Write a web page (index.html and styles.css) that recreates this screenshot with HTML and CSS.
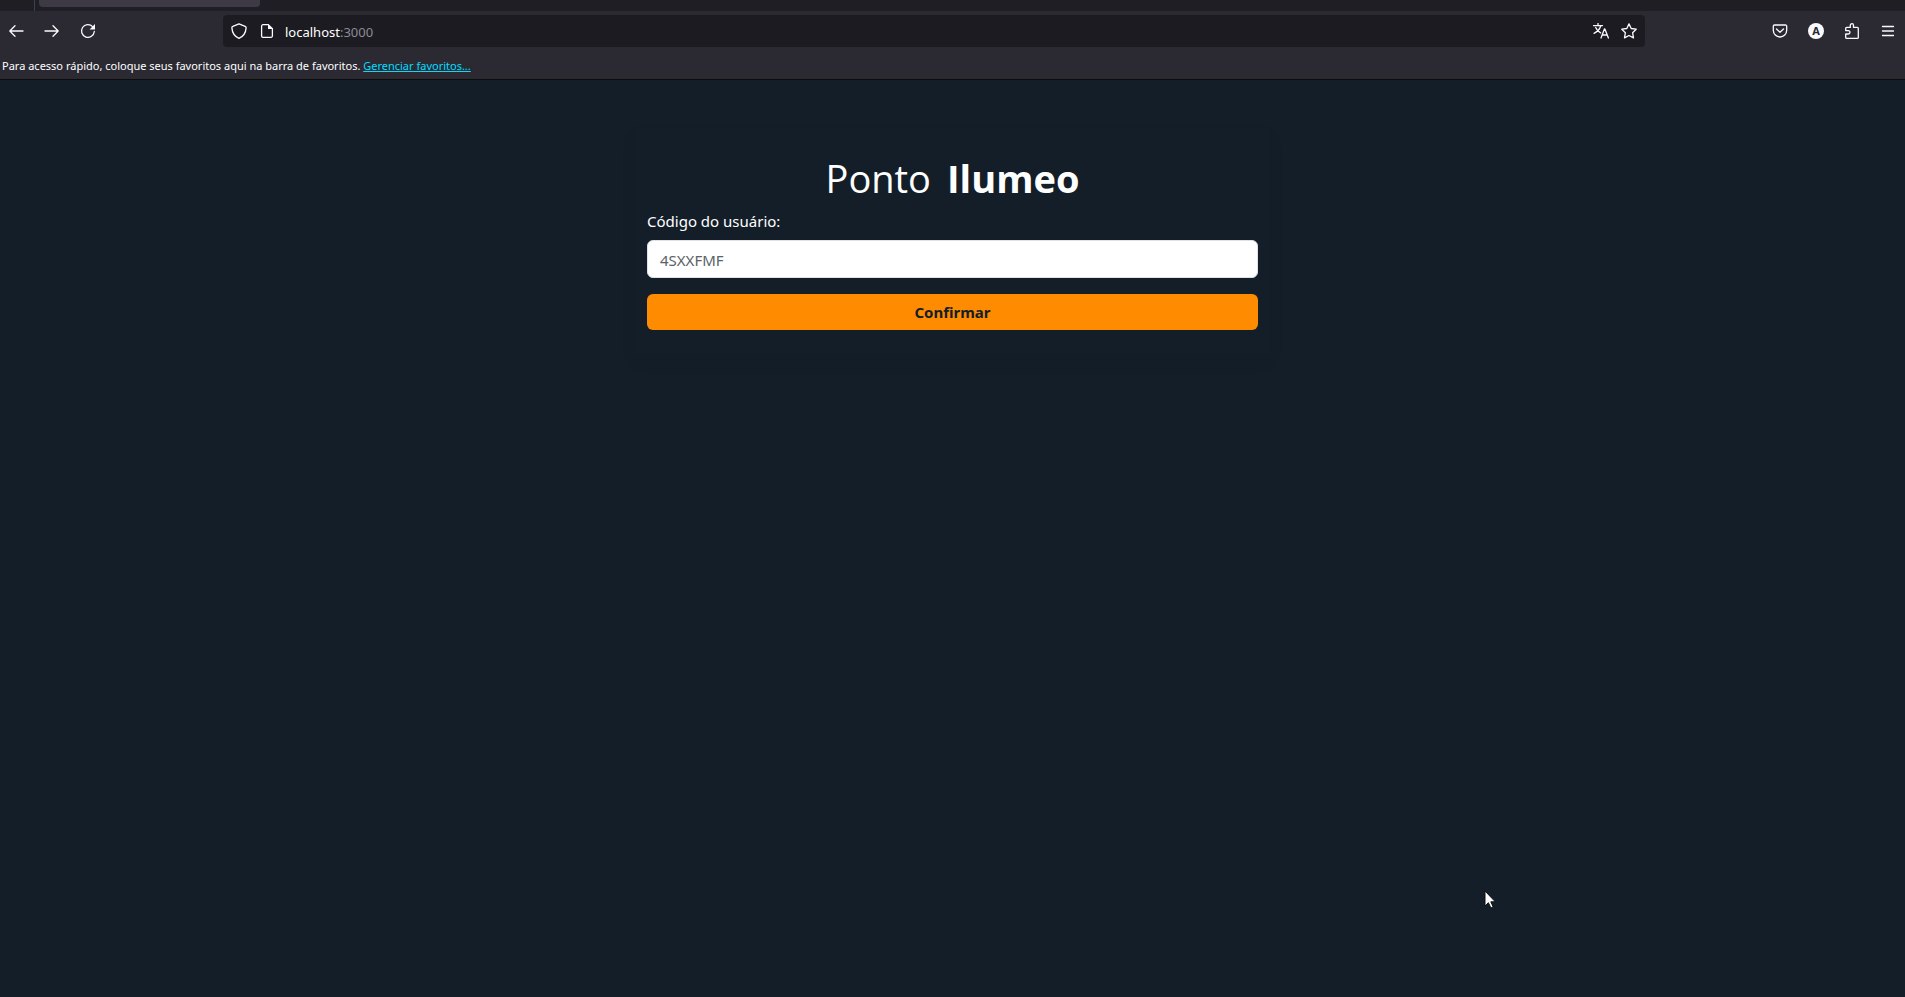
FILE: index.html
```html
<!DOCTYPE html>
<html lang="pt-BR">
<head>
<meta charset="utf-8">
<meta name="viewport" content="width=device-width, initial-scale=1">
<title>Ponto Ilumeo</title>
<link rel="stylesheet" href="styles.css">
</head>
<body>
<div class="browser">
  <div class="tab-strip">
    <span class="tab-divider"></span>
    <span class="tab"></span>
  </div>
  <nav class="toolbar" aria-label="Navegação">
    <div class="nav-buttons">
      <button class="tool" type="button" aria-label="Voltar"><svg class="icon" viewBox="0 0 16 16"><path d="M15 8H1.8M7 2.8 1.8 8 7 13.2"/></svg></button>
      <button class="tool" type="button" aria-label="Avançar"><svg class="icon" viewBox="0 0 16 16"><path d="M1 8h13.2M9 2.8 14.2 8 9 13.2"/></svg></button>
      <button class="tool" type="button" aria-label="Recarregar"><svg class="icon" viewBox="0 0 16 16"><path d="M14.3 8.5A6.4 6.4 0 1 1 12.6 3.6"/><path class="solid" d="M15 1v5.4H9.6z"/></svg></button>
    </div>
    <div class="address">
      <svg class="icon" viewBox="0 0 16 16"><path d="M8 .8 14.2 3.300C15 3.600 15.200 4 15.100 4.900 14.800 9.600 12.400 13.500 8 15.300 3.600 13.500 1.200 9.600.9 4.900.8 4 1 3.600 1.800 3.300z"/></svg>
      <svg class="icon" viewBox="0 0 16 16"><path d="M9.300 1.700H4a1.400 1.400 0 0 0-1.400 1.400v9.800A1.400 1.400 0 0 0 4 14.300h8a1.400 1.400 0 0 0 1.400-1.400V5.800z"/><path class="solid" d="M9 1.300V6h5z"/></svg>
      <span class="url">localhost<span class="port">:3000</span></span>
      <svg class="icon" viewBox="0 0 16 16"><path d="M.5 2.600h9M5 .5v2.100M7.800 2.800C6.800 6 4.400 8.800 1 10.300M2.700 4.500C3.700 7 5.400 8.800 7.600 9.900M8 15l3.400-9h.5l3.500 9M9.300 12h4.800"/></svg>
      <svg class="icon" viewBox="0 0 16 16"><path d="M8 .9 10.200 5.500 15.200 6.200 11.600 9.700 12.500 14.900 8 12.500 3.500 14.900 4.400 9.700.8 6.200 5.800 5.500z"/></svg>
    </div>
    <div class="tool-buttons">
      <button class="tool" type="button" aria-label="Pocket"><svg class="icon" viewBox="0 0 16 16"><path d="M2.500 2h11a1.200 1.200 0 0 1 1.200 1.200v4.100a6.700 6.700 0 0 1-13.400 0V3.200A1.200 1.200 0 0 1 2.500 2z"/><path d="M4.500 6 8 9.300 11.500 6"/></svg></button>
      <button class="tool" type="button" aria-label="Conta"><span class="avatar">A</span></button>
      <button class="tool" type="button" aria-label="Extensões"><svg class="icon" viewBox="0 0 16 16"><path d="M1.700 7.600V5.400a1 1 0 0 1 1-1h3.600V2.300a1.600 1.600 0 0 1 3.200 0v2.100h3.800a1 1 0 0 1 1 1v9a1 1 0 0 1-1 1H2.700a1 1 0 0 1-1-1v-3.400h2.600a1.600 1.600 0 0 0 0-3.400z"/></svg></button>
      <button class="tool" type="button" aria-label="Menu"><svg class="icon" viewBox="0 0 16 16"><path d="M2.500 3.500h11M2.500 8h11M2.500 12.500h11"/></svg></button>
    </div>
  </nav>
  <div class="bookmarks">Para acesso rápido, coloque seus favoritos aqui na barra de favoritos. <a href="#">Gerenciar favoritos...</a></div>
</div>
<main class="page">
  <form class="card">
    <h1 class="title"><span>Ponto</span><strong>Ilumeo</strong></h1>
    <label class="label" for="code">Código do usuário:</label>
    <input class="field" id="code" type="text" placeholder="4SXXFMF">
    <button class="submit" type="button">Confirmar</button>
  </form>
</main>
<svg class="pointer" viewBox="0 0 12 19" aria-hidden="true"><path d="M1 1v15l3.400-3.300 2.500 5.300 2.300-1-2.400-5.200H11.300z"/></svg>
</body>
</html>
```
FILE: styles.css
```css
* {
  box-sizing: border-box;
}

body {
  margin: 0;
  min-height: 100vh;
  display: flex;
  flex-direction: column;
  background: #141e29;
  color: #fff;
  font: 15px/24px "Noto Sans", "Open Sans", sans-serif;
}

.browser {
  background: #2b2a33;
  border-bottom: 1px solid #0c0c0d;
}

.tab-strip {
  display: flex;
  height: 11px;
  padding-left: 34px;
  gap: 4px;
  background: #1f1e25;
}

.tab-divider {
  width: 1px;
  background: #3a4450;
}

.tab {
  width: 221px;
  height: 7px;
  border-radius: 0 0 4px 4px;
  background: #3d3a46;
}

.toolbar {
  display: flex;
  align-items: center;
  justify-content: space-between;
  height: 40px;
  padding-right: 1px;
}

.nav-buttons,
.tool-buttons {
  display: flex;
  gap: 4px;
}

.tool {
  display: grid;
  place-items: center;
  width: 32px;
  height: 32px;
  padding: 0;
  border: 0;
  background: none;
  color: inherit;
}

.icon {
  flex: none;
  width: 16px;
  height: 16px;
  fill: none;
  stroke: #fbfbfe;
  stroke-width: 1.3;
  stroke-linecap: round;
  stroke-linejoin: round;
}

.icon .solid {
  fill: #fbfbfe;
  stroke: none;
}

.avatar {
  width: 16px;
  height: 16px;
  border-radius: 50%;
  background: #fbfbfe;
  color: #2b2a33;
  font: bold 11px/16px "Noto Sans", sans-serif;
}

.address {
  display: flex;
  align-items: center;
  gap: 12px;
  flex: 1;
  height: 32px;
  margin: 0 119px;
  padding: 0 8px;
  border-radius: 4px;
  background: #1c1b22;
}

.url {
  flex: 1;
  margin-left: -2px;
  padding-top: 2px;
  font-size: 13px;
}

.port {
  color: #8c8b93;
}

.bookmarks {
  height: 28px;
  padding-left: 2px;
  font-size: 11px;
  line-height: 30px;
}

.bookmarks a {
  color: #00ddff;
}

.page {
  flex: 1;
  padding-top: 48px;
}

.card {
  display: flex;
  flex-direction: column;
  width: 33.3333%;
  margin: 0 auto;
  padding: 26px 12px 24px;
  box-shadow: 0 8px 16px rgba(0, 0, 0, 0.05);
}

.title {
  display: flex;
  justify-content: center;
  gap: 16px;
  margin: 0 0 7px;
  font-family: "Open Sans", "Noto Sans", sans-serif;
  font-size: 38px;
  line-height: 48px;
  font-weight: 400;
}

.title strong {
  font-weight: 700;
}

.label {
  margin-bottom: 7px;
}

.field {
  height: 38px;
  margin-bottom: 16px;
  padding: 8px 12px 6px;
  border: 1px solid #dee2e6;
  border-radius: 6px;
  background: #fff;
  color: #212529;
  font: inherit;
}

.field::placeholder {
  color: #5c6267;
  opacity: 1;
}

.submit {
  height: 36px;
  padding: 6px 12px;
  border: 0;
  border-radius: 6px;
  background: #ff8c00;
  color: #141e29;
  font: inherit;
  font-weight: 700;
}

.pointer {
  position: absolute;
  left: 77.9%;
  top: 890px;
  width: 12px;
  height: 19px;
  fill: #fff;
  stroke: #111;
  stroke-width: 1;
}
```
